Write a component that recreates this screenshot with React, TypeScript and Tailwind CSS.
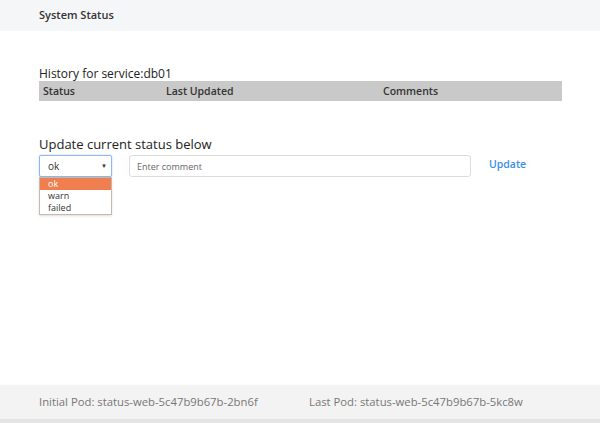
import React from "react";

const font = { fontFamily: '"Open Sans", "Noto Sans", sans-serif' };

export default function App() {
  return (
    <div className="flex h-[423px] w-[600px] flex-col bg-white text-[#333]" style={font}>
      <header className="flex h-[31px] items-center bg-[#f5f6f8] pl-[39px]">
        <span className="text-[11px] font-semibold text-[#333]">System Status</span>
      </header>

      <main className="flex-1 px-[39px] pt-[35px]">
        <div className="text-[12px] leading-[15px] text-[#222]">History for service:db01</div>
        <div className="mr-[-1px] flex h-[20px] items-center bg-[#c9c9c9] pt-[2px] text-[10.5px] font-semibold text-[#333]">
          <span className="w-[127px] pl-[4px]">Status</span>
          <span className="w-[217px]">Last Updated</span>
          <span>Comments</span>
        </div>

        <div className="mt-[33px] text-[13px] leading-[20px] text-[#222]">Update current status below</div>
        <div className="mt-[1px] flex items-start">
          <div className="relative w-[73px]">
            <div className="flex h-[22px] items-center justify-between rounded-[2px] border border-[#8fb8ee] bg-white pl-[8px] pr-[4px] text-[10px] text-[#333] shadow-[0_0_2px_rgba(80,140,230,0.4)]">
              <span>ok</span>
              <span className="text-[6px]">▼</span>
            </div>
            <div className="absolute left-0 top-[22px] w-[73px] border border-[#c9b8ae] bg-white text-[9px] leading-[12px] text-[#333] shadow-sm">
              <div className="bg-[#f07f4f] pl-[8px] text-white">ok</div>
              <div className="pl-[8px]">warn</div>
              <div className="pl-[8px]">failed</div>
            </div>
          </div>
          <input
            className="ml-[17px] h-[22px] w-[342px] rounded-[3px] border border-[#dcdcdc] px-[7px] text-[9px] outline-none placeholder:text-[#666]"
            placeholder="Enter comment"
          />
          <button className="ml-[18px] h-[20px] text-[10.5px] font-semibold text-[#3a8ee6]">Update</button>
        </div>
      </main>

      <footer className="flex h-[34px] items-center bg-[#f3f3f3] pl-[39px] text-[11.3px] text-[#777] shadow-[0_2px_3px_rgba(0,0,0,0.25)]">
        <span className="w-[270px]">Initial Pod: status-web-5c47b9b67b-2bn6f</span>
        <span>Last Pod: status-web-5c47b9b67b-5kc8w</span>
      </footer>
      <div className="h-[4px] bg-[#e4e4e4]" />
    </div>
  );
}
